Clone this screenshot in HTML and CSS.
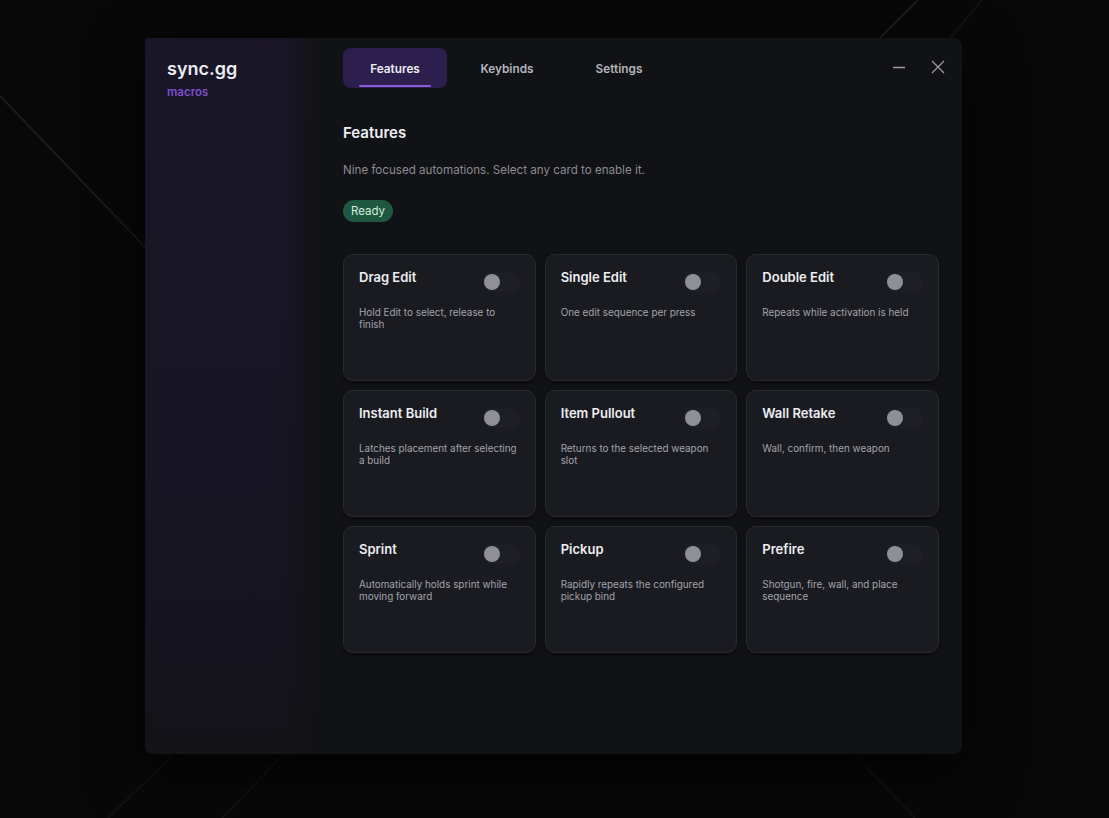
FILE: index.html
```html
<!DOCTYPE html>
<html lang="en">
<head>
    <meta charset="UTF-8">
    <meta name="viewport" content="width=device-width, initial-scale=1.0">
    <title>sync.gg macros</title>
    <link rel="stylesheet" href="styles.css">
</head>
<body>

    <!-- Backdrop streaks -->
    <svg class="backdrop" width="1109" height="818" viewBox="0 0 1109 818">
        <line x1="0" y1="96" x2="146" y2="248" stroke="#1b1b1c" stroke-width="2"/>
        <line x1="918" y1="0" x2="880" y2="38" stroke="#1d1d1e" stroke-width="2"/>
        <line x1="982" y1="0" x2="950" y2="38" stroke="#121213" stroke-width="2"/>
        <line x1="172" y1="756" x2="108" y2="818" stroke="#111112" stroke-width="2"/>
        <line x1="282" y1="756" x2="222" y2="818" stroke="#131314" stroke-width="2"/>
        <line x1="855" y1="756" x2="915" y2="818" stroke="#111112" stroke-width="2"/>
    </svg>

    <!-- App Window -->
    <div class="app-window">
        <!-- Sidebar -->
        <aside class="sidebar">
            <div class="brand">sync.gg</div>
            <div class="brand-sub">macros</div>
        </aside>

        <!-- Main Panel -->
        <main class="panel">
            <div class="panel-head">
                <nav class="tabs">
                    <button class="tab active">Features</button>
                    <button class="tab">Keybinds</button>
                    <button class="tab">Settings</button>
                </nav>
                <div class="win-controls">
                    <button class="win-btn" title="Minimize">
                        <svg width="14" height="14" viewBox="0 0 14 14"><line x1="1" y1="7.5" x2="13" y2="7.5" stroke="#9a9aa0" stroke-width="1.3"/></svg>
                    </button>
                    <button class="win-btn" title="Close">
                        <svg width="14" height="14" viewBox="0 0 14 14"><path d="M1 1 L13 13 M13 1 L1 13" stroke="#9a9aa0" stroke-width="1.3" fill="none"/></svg>
                    </button>
                </div>
            </div>

            <h2 class="section-title">Features</h2>
            <p class="section-desc">Nine focused automations. Select any card to enable it.</p>
            <span class="status-pill">Ready</span>

            <div class="feature-grid" id="feature-grid"></div>
        </main>
    </div>

    <script>
        // Feature list
        const features = [
            ["Drag Edit", "Hold Edit to select, release to finish"],
            ["Single Edit", "One edit sequence per press"],
            ["Double Edit", "Repeats while activation is held"],
            ["Instant Build", "Latches placement after selecting a build"],
            ["Item Pullout", "Returns to the selected weapon slot"],
            ["Wall Retake", "Wall, confirm, then weapon"],
            ["Sprint", "Automatically holds sprint while moving forward"],
            ["Pickup", "Rapidly repeats the configured pickup bind"],
            ["Prefire", "Shotgun, fire, wall, and place sequence"]
        ];

        const grid = document.getElementById("feature-grid");

        features.forEach(function (f) {
            const card = document.createElement("div");
            card.className = "feature-card";
            card.innerHTML =
                '<div class="card-top">' +
                    '<div class="card-title">' + f[0] + '</div>' +
                    '<span class="toggle"><span class="knob"></span></span>' +
                '</div>' +
                '<div class="card-desc">' + f[1] + '</div>';
            // Clicking a card flips its toggle
            card.addEventListener("click", function () {
                card.classList.toggle("on");
            });
            grid.appendChild(card);
        });
    </script>

</body>
</html>
```

FILE: styles.css
```css
/* Reset and basic styles */
html, body {
    padding: 0;
    margin: 0;
    background: #080808;
    font-family: Inter, "Noto Sans", sans-serif;
    color: #e9e9ee;
}

body {
    position: relative;
    height: 818px;
    overflow: hidden;
}

.backdrop {
    position: absolute;
    left: 0;
    top: 0;
}

button {
    font-family: inherit;
    border: none;
    background: none;
    cursor: pointer;
}

/* Window */
.app-window {
    position: relative;
    display: flex;
    width: 817px;
    height: 716px;
    margin: 38px 0 0 145px;
    background: #111215;
    border-radius: 3px 8px 8px 8px;
    overflow: hidden;
    box-shadow: 0 20px 60px #000c;
}

/* Sidebar */
.sidebar {
    width: 173px;
    flex-shrink: 0;
    padding: 20px 22px;
    box-sizing: border-box;
    background:
        linear-gradient(90deg, transparent 0%, transparent 80%, #13131700 80%, #121216 100%),
        linear-gradient(180deg, #1a1627 0%, #181525 45%, #161421 80%, #131318 100%);
}

.brand {
    font-size: 18px;
    font-weight: 600;
    color: #ececf1;
}

.brand-sub {
    margin-top: 6px;
    font-size: 11.5px;
    font-weight: 600;
    color: #7a4fcf;
}

/* Main panel */
.panel {
    flex: 1;
    padding: 10px 23px 0 25px;
}

.panel-head {
    display: flex;
    align-items: center;
    justify-content: space-between;
    margin-right: -11px;
}

.tabs {
    display: flex;
    gap: 8px;
}

.tab {
    position: relative;
    width: 104px;
    height: 40px;
    padding-top: 2px;
    border-radius: 8px;
    font-size: 11.8px;
    font-weight: 600;
    color: #b4b4ba;
}

.tab.active {
    background: #2d1f4d;
    color: #ececf2;
}

.tab.active::after {
    content: "";
    position: absolute;
    left: 16px;
    right: 16px;
    bottom: 1px;
    height: 2px;
    border-radius: 1px;
    background: #8a5bd8;
}

.win-controls {
    display: flex;
    gap: 15px;
    margin-top: -2px;
}

.win-btn {
    width: 24px;
    height: 24px;
    padding: 0;
    display: flex;
    align-items: center;
    justify-content: center;
}

.section-title {
    margin: 35px 0 0;
    font-size: 15px;
    line-height: 20px;
    font-weight: 600;
    color: #eeeef2;
}

.section-desc {
    margin: 18px 0 0;
    font-size: 11.6px;
    line-height: 18px;
    color: #8b8b92;
}

.status-pill {
    display: inline-block;
    margin-top: 21px;
    padding: 0 8px;
    height: 22px;
    line-height: 22px;
    border-radius: 11px;
    background: #1f5840;
    color: #d6ecdf;
    font-size: 11.5px;
}

/* Feature grid */
.feature-grid {
    display: grid;
    grid-template-columns: repeat(3, 1fr);
    gap: 9px 9px;
    margin-top: 32px;
}

.feature-card {
    height: 127px;
    box-sizing: border-box;
    padding: 12px 15px;
    background: #1a1b21;
    border: 1px solid #292a30;
    border-radius: 10px;
    box-shadow: 0 2px 4px #0006;
    cursor: pointer;
}

.card-top {
    display: flex;
    justify-content: space-between;
    align-items: flex-start;
}

.card-title {
    font-size: 13px;
    line-height: 20px;
    font-weight: 600;
    color: #ededf1;
}

.toggle {
    position: relative;
    width: 38px;
    height: 20px;
    margin-top: 5px;
    border-radius: 10px;
    background: #1e1f25;
}

.knob {
    position: absolute;
    left: 2px;
    top: 2px;
    width: 16px;
    height: 16px;
    border-radius: 50%;
    background: #8f8f9a;
    transition: left 0.2s;
}

.feature-card.on .toggle {
    background: #5b3a9c;
}

.feature-card.on .knob {
    left: 20px;
    background: #fff;
}

.card-desc {
    margin-top: 14px;
    font-size: 9.9px;
    line-height: 12px;
    color: #a3a3ab;
}
```
